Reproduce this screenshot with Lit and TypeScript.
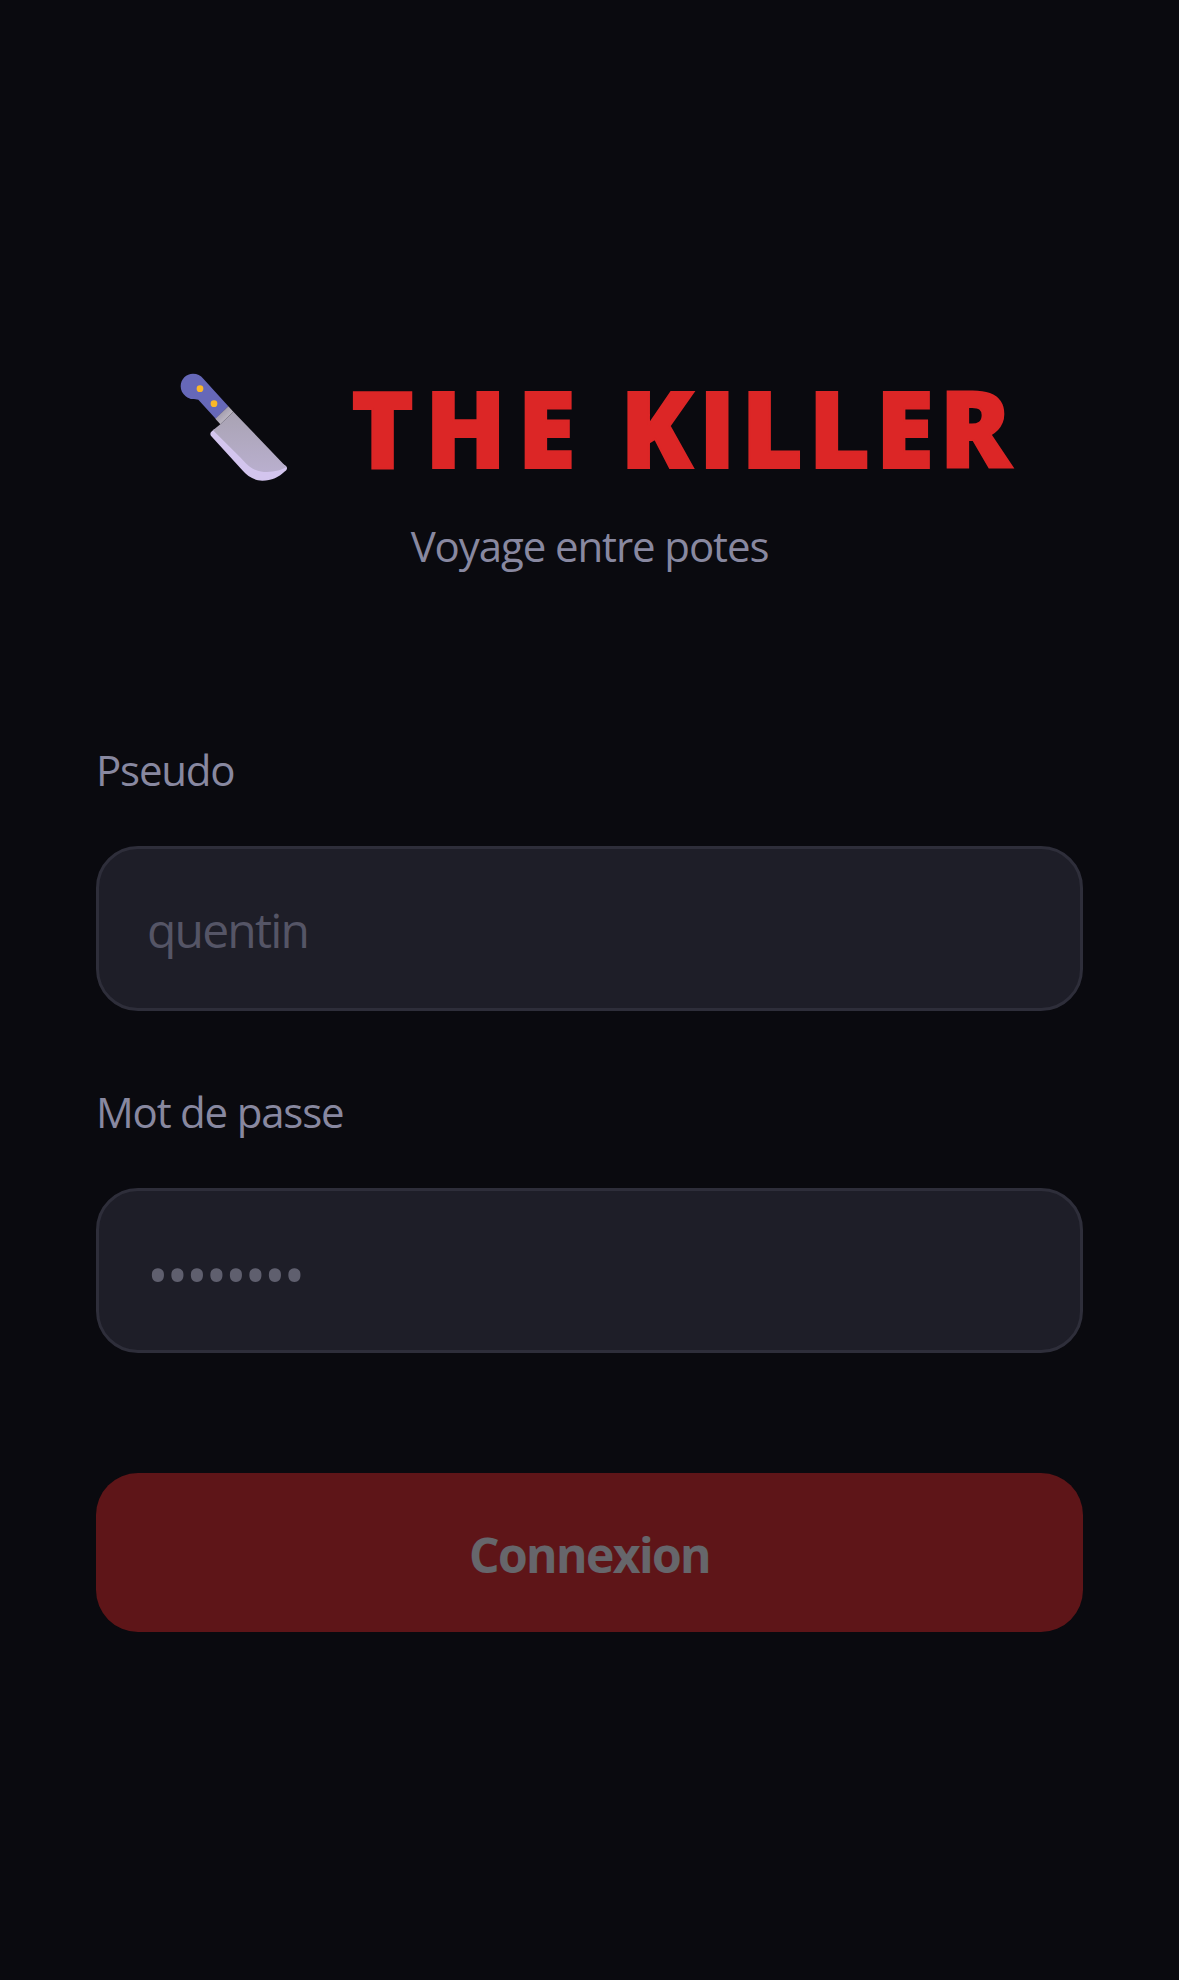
import { LitElement, html, css } from "lit";
import { customElement } from "lit/decorators.js";

@customElement("app-root")
export class AppRoot extends LitElement {
  static styles = css`
    :host {
      display: block;
      font-family: "Open Sans", "Noto Sans", sans-serif;
    }
    * { box-sizing: border-box; }
    .page {
      height: 1980px;
      background: #0a0a0f;
      padding: 372px 96px 0;
      display: flex;
      flex-direction: column;
    }
    .head {
      display: flex;
      flex-direction: column;
      align-items: center;
      margin-bottom: 164px;
    }
    h1 {
      margin: 0 0 0 17px;
      height: 110px;
      display: flex;
      align-items: center;
      font-size: 106px;
      font-weight: 800;
      letter-spacing: 5.6px;
      -webkit-text-stroke: 2px #dc2626;
      line-height: 110px;
      color: #dc2626;
      white-space: pre;
    }
    .first { letter-spacing: 11.3px; }
    .knife {
      width: 110px;
      height: 110px;
      margin-right: 62px;
      flex: none;
    }
    .sub {
      margin-top: 34px;
      font-size: 42px;
      line-height: 60px;
      letter-spacing: -1.1px;
      color: #8888a0;
    }
    .group {
      display: flex;
      flex-direction: column;
      margin-bottom: 71px;
    }
    label {
      font-size: 42px;
      line-height: 60px;
      letter-spacing: -1.2px;
      color: #8888a0;
      margin-bottom: 46px;
    }
    input {
      width: 100%;
      height: 165px;
      padding: 2px 48px 0;
      background: #1e1e28;
      border: 3px solid #2e2e3a;
      border-radius: 42px;
      font: inherit;
      font-size: 48px;
      letter-spacing: -1.8px;
      outline: none;
      color: #f0f0f0;
    }
    input::placeholder { color: #555566; opacity: 1; }
    input.dots {
      font-size: 58px;
      letter-spacing: -2.3px;
      padding-top: 8px;
    }
    input.dots::placeholder { color: #5f5f6e; }
    button {
      margin-top: 49px;
      width: 100%;
      height: 159px;
      padding: 4px 0 0;
      border: none;
      border-radius: 42px;
      background: #dc2626;
      color: #f0f0f5;
      font: inherit;
      font-size: 48px;
      font-weight: 700;
      letter-spacing: -1.6px;
      opacity: 0.4;
    }
  `;

  render() {
    return html`
      <div class="page">
        <div class="head">
          <h1>
            <svg class="knife" viewBox="90 65 330 330">
              <defs>
                <linearGradient id="f" x1="0" y1="0" x2="1" y2="1">
                  <stop offset="0" stop-color="#8d8599" />
                  <stop offset="1" stop-color="#d4d0d8" />
                </linearGradient>
                <linearGradient id="b" x1="0" y1="0" x2="0" y2="1">
                  <stop offset="0" stop-color="#a9a3b3" />
                  <stop offset="1" stop-color="#b9afce" />
                </linearGradient>
              </defs>
              <path d="M95 108C95 86 112 70 132 70C145 70 155 75 163 85L238 168L200 205L148 148C138 146 124 150 110 138C100 130 95 120 95 108Z" fill="#6668b8" />
              <circle cx="153" cy="115" r="10" fill="#fcb827" />
              <circle cx="195" cy="160" r="10" fill="#fcb827" />
              <path d="M238 168L253 184L214 222L199 205Z" fill="url(#f)" />
              <path d="M187 244L196 236L408 345C418 352 414 358 408 363C390 381 368 391 340 391C315 390 295 378 280 360L187 258C183 253 183 248 187 244Z" fill="#d3c5ee" />
              <path d="M253 184L412 350C395 362 350 372 318 358C300 350 290 338 275 322L192 240L214 222Z" fill="url(#b)" />
            </svg>
            <span><span class="first">THE</span> KILLER</span>
          </h1>
          <div class="sub">Voyage entre potes</div>
        </div>
        <div class="group">
          <label for="u">Pseudo</label>
          <input id="u" placeholder="quentin" />
        </div>
        <div class="group">
          <label for="p">Mot de passe</label>
          <input id="p" class="dots" placeholder="••••••••" />
        </div>
        <button>Connexion</button>
      </div>
    `;
  }
}
